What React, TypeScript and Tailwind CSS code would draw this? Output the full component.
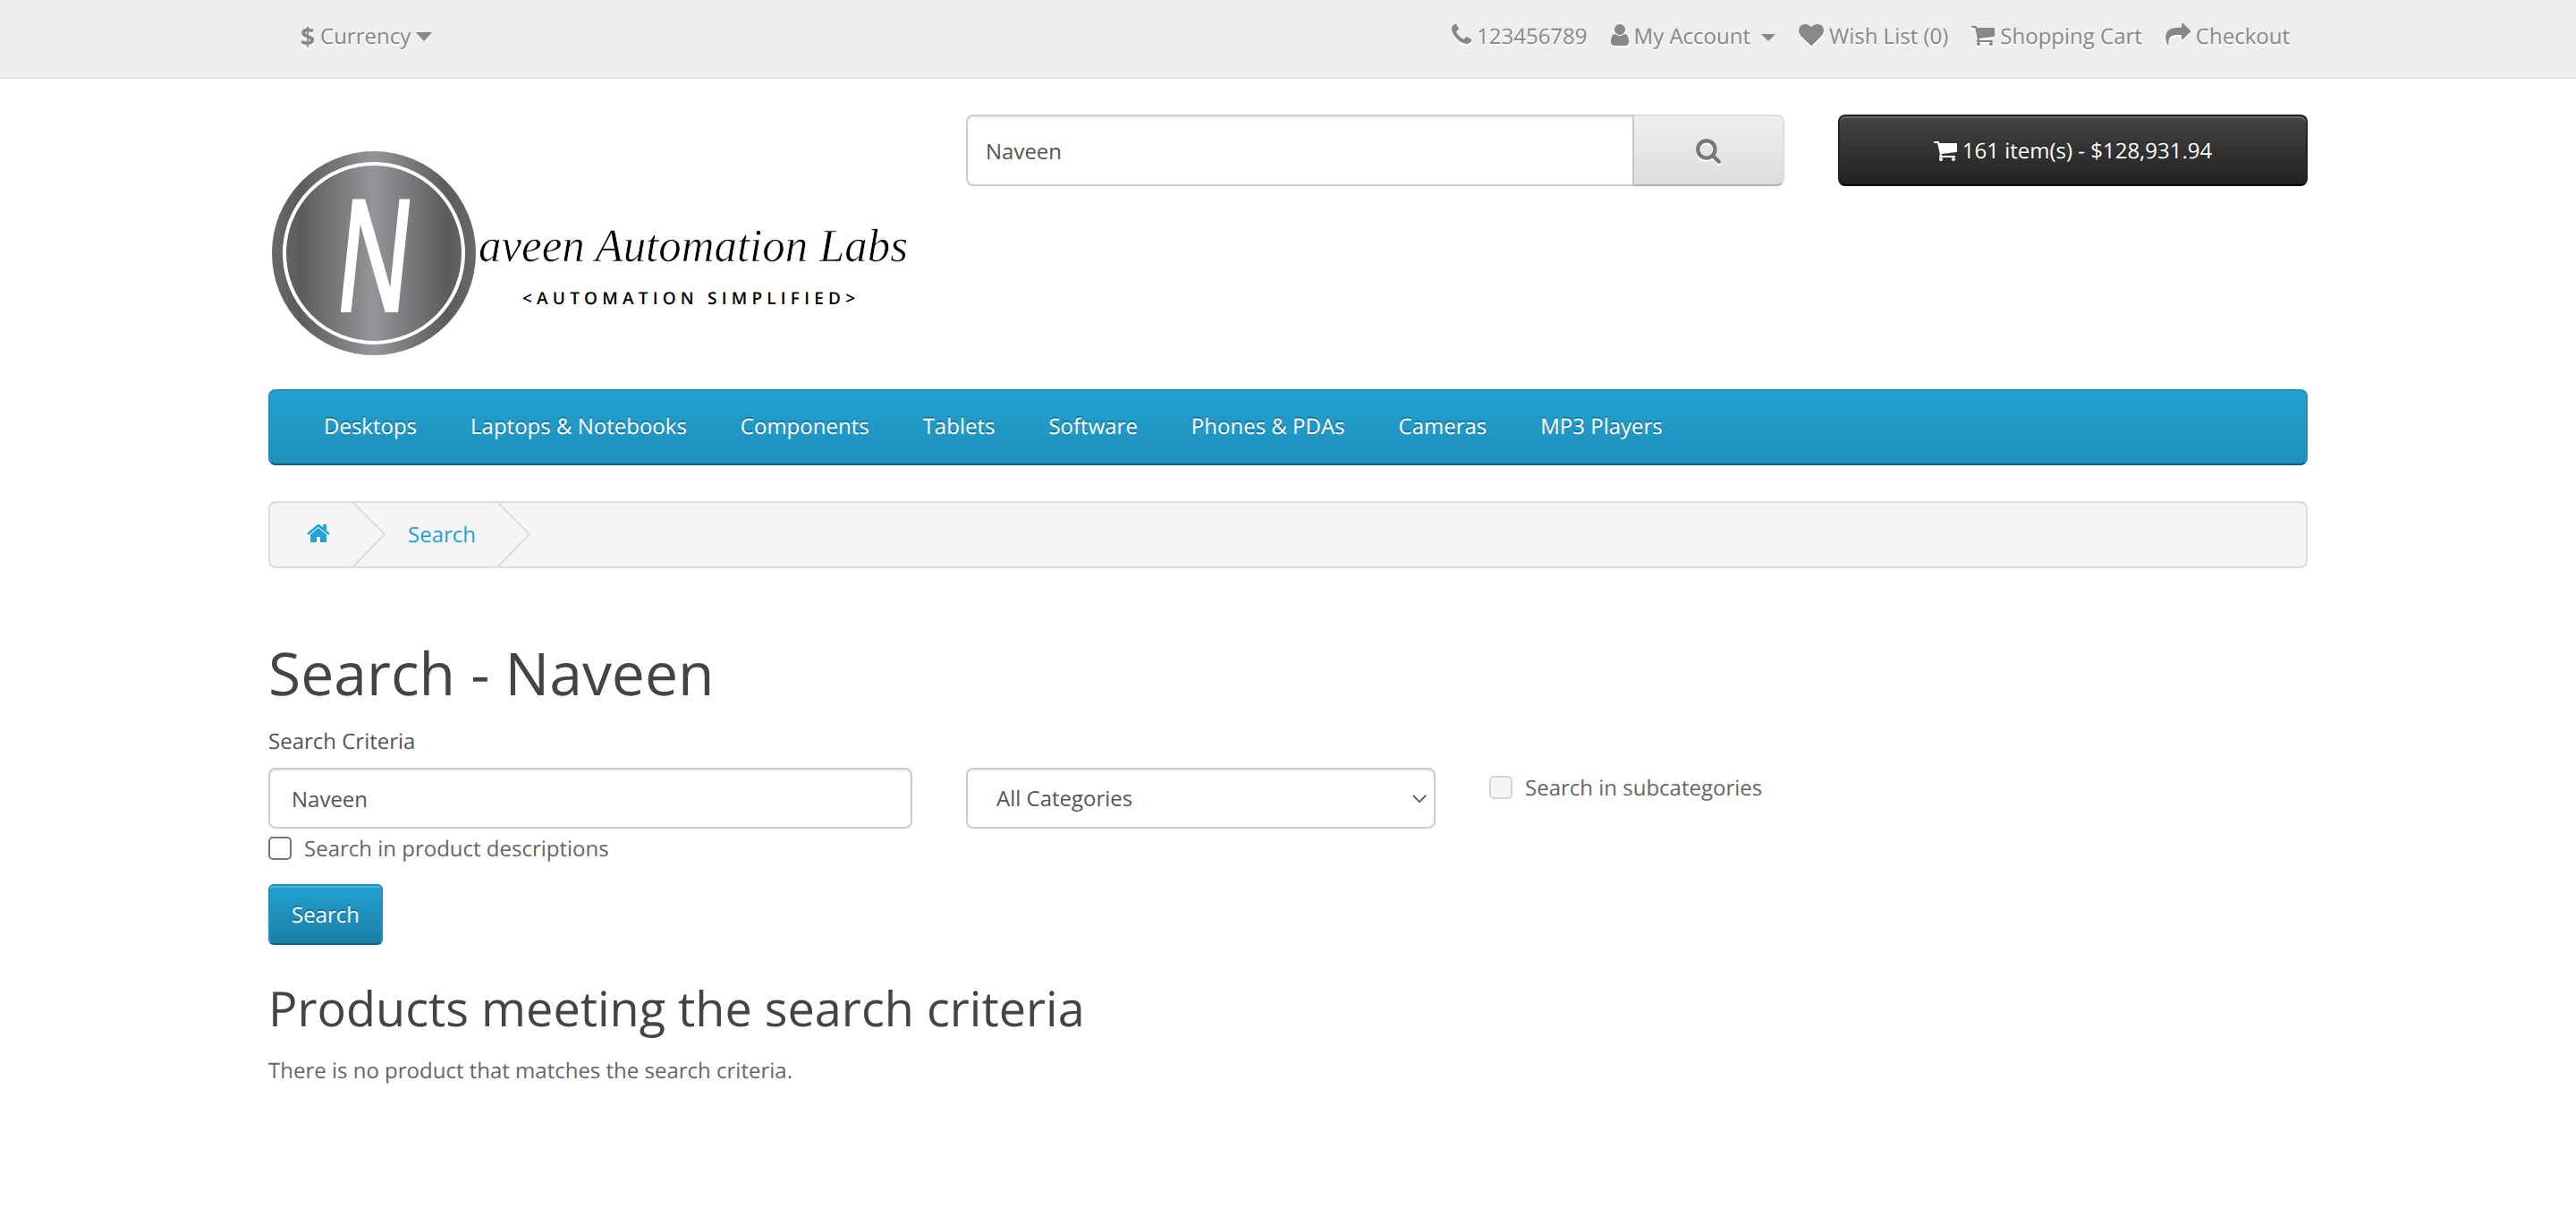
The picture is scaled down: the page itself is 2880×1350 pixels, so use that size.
const P = {
  phone: "M1600 1240q0 27-10 70.5t-21 68.5q-21 50-122 106-94 51-186 51-27 0-53-3.5t-57.5-12.5-47-14.5-55.5-20.5-49-18q-98-35-175-83-127-79-264-216t-216-264q-48-77-83-175-3-9-18-49t-20.5-55.5-14.5-47-12.5-57.5-3.5-53q0-92 51-186 56-101 106-122 25-11 68.5-21t70.5-10q14 0 21 3 18 6 53 76 11 19 30 54t35 63.5 31 53.5q3 4 17.5 25t21.5 35.5 7 28.5q0 20-28.5 50t-62 55-62 53-28.5 46q0 9 5 22.5t8.5 20.5 14 24 11.5 19q76 137 174 235t235 174q2 1 19 11.5t24 14 20.5 8.5 22.5 5q18 0 46-28.5t53-62 55-62 50-28.5q14 0 28.5 7t35.5 21.5 25 17.5q25 15 53.5 31t63.5 35 54 30q70 35 76 53 3 7 3 21z",
  user: "M1536 1399q0 109-62.5 187t-150.5 78h-854q-88 0-150.5-78t-62.5-187q0-85 8.5-160.5t31.5-152 58.5-131 94-89 134.5-34.5q131 128 313 128t313-128q76 0 134.5 34.5t94 89 58.5 131 31.5 152 8.5 160.5zm-256-887q0 159-112.5 271.5t-271.5 112.5-271.5-112.5-112.5-271.5 112.5-271.5 271.5-112.5 271.5 112.5 112.5 271.5z",
  heart: "M896 1664q-26 0-44-18l-624-602q-10-8-27.5-26t-55.5-65.5-68-97.5-53.5-121-23.5-138q0-220 127-344t351-124q62 0 126.5 21.5t120 58 95.5 68.5 76 68q36-36 76-68t95.5-68.5 120-58 126.5-21.5q224 0 351 124t127 344q0 221-229 450l-623 600q-18 18-44 18z",
  cart: "M704 1536q0 52-38 90t-90 38-90-38-38-90 38-90 90-38 90 38 38 90zm896 0q0 52-38 90t-90 38-90-38-38-90 38-90 90-38 90 38 38 90zm128-1088v512q0 24-16.5 42.5t-40.5 21.5l-1044 122q13 60 13 70 0 16-24 64h920q26 0 45 19t19 45-19 45-45 19h-1024q-26 0-45-19t-19-45q0-11 8-31.5t16-36 21.5-40 15.5-29.5l-177-823h-204q-26 0-45-19t-19-45 19-45 45-19h256q16 0 28.5 6.5t19.5 15.5 13 24.5 8 26 5.5 29.5 4.5 26h1201q26 0 45 19t19 45z",
  share: "M1792 640q0 26-19 45l-512 512q-19 19-45 19t-45-19-19-45v-256h-224q-98 0-175.5 6t-154 21.5-133 42.5-105.5 69.5-79.5 103-48 142-18 186.5q0 45 4 102 0 5 2 20t2 23q0 13-7.5 21.5t-20.5 8.5q-14 0-24-15-6-8-11-19t-11.5-26-9.5-22q-127-285-127-451 0-199 53-333 162-403 875-403h224v-256q0-26 19-45t45-19 45 19l512 512q19 19 19 45z",
  home: "M1472 992v480q0 26-19 45t-45 19h-384v-384h-256v384h-384q-26 0-45-19t-19-45v-480q0-1 .5-3t.5-3l575-474 575 474q1 2 1 6zm223-69l-62 74q-8 9-21 11h-3q-13 0-21-7l-692-577-692 577q-12 8-24 7-13-2-21-11l-62-74q-8-10-7-23.5t11-21.5l719-599q32-26 76-26t76 26l244 204v-195q0-14 9-23t23-9h192q14 0 23 9t9 23v408l219 182q10 8 11 21.5t-7 23.5z",
  search: "M1216 832q0-185-131.5-316.5t-316.5-131.5-316.5 131.5-131.5 316.5 131.5 316.5 316.5 131.5 316.5-131.5 131.5-316.5zm512 832q0 52-38 90t-90 38q-54 0-90-38l-343-342q-179 124-399 124-143 0-273.5-55.5t-225-150-150-225-55.5-273.5 55.5-273.5 150-225 225-150 273.5-55.5 273.5 55.5 225 150 150 225 55.5 273.5q0 220-124 399l343 343q37 37 37 90z",
};

function Icon({ d, className }: { d: string; className: string }) {
  return (
    <svg viewBox="0 0 1792 1792" className={className} fill="currentColor" aria-hidden="true">
      <path d={d} />
    </svg>
  );
}

function TopLink({ icon, box, label, caret }: { icon: string; box: string; label: string; caret?: boolean }) {
  return (
    <span className="flex items-center [text-shadow:0_2px_0_#fff]">
      <span className={`${box} h-[28px] mr-[6px] -mt-[4px] flex justify-center`}>
        <Icon d={icon} className="w-[28px] h-[28px] shrink-0 drop-shadow-[0_2px_0_#fff]" />
      </span>
      <span>{label}</span>
      {caret && <span className="ml-[12px] mt-[2px] w-0 h-0 border-x-[8px] border-x-transparent border-t-[8px] border-t-[#888]" />}
    </span>
  );
}

function Logo() {
  return (
    <svg viewBox="0 0 720 287" className="w-[720px] h-[287px] block" aria-label="Naveen Automation Labs">
      <defs>
        <linearGradient id="metal" x1="0" x2="1" y1="0" y2="0">
          <stop offset="0" stopColor="#696969" />
          <stop offset="0.14" stopColor="#5c5c5c" />
          <stop offset="0.5" stopColor="#94959a" />
          <stop offset="0.86" stopColor="#5c5c5c" />
          <stop offset="1" stopColor="#696969" />
        </linearGradient>
      </defs>
      <circle cx="118" cy="155" r="114" fill="url(#metal)" />
      <circle cx="118" cy="155" r="100" fill="none" stroke="#fff" strokeWidth="4" />
      <text textAnchor="middle" fill="#fff" stroke="#fff" strokeWidth="4" fontFamily="'Liberation Sans', sans-serif" fontWeight="400" fontSize="178" transform="translate(113 219) skewX(-6) scale(0.62 1)">N</text>
      <text fill="#000" stroke="#fff" strokeWidth="0.45" fontFamily="'Liberation Serif', serif" fontStyle="italic" fontSize="36" textLength="480" lengthAdjust="spacingAndGlyphs" transform="translate(235 164) scale(1 1.45)">aveen Automation Labs</text>
      <text x="284" y="212" fill="#000" fontFamily="'Open Sans', sans-serif" fontWeight="600" fontSize="19" textLength="372" lengthAdjust="spacing">&lt;AUTOMATION SIMPLIFIED&gt;</text>
    </svg>
  );
}

const nav = ["Desktops", "Laptops & Notebooks", "Components", "Tablets", "Software", "Phones & PDAs", "Cameras", "MP3 Players"];

export default function App() {
  return (
    <div className="min-h-[1350px] bg-white text-[24px] leading-[40px] text-[#666] font-['Open_Sans',sans-serif] [text-rendering:geometricPrecision]">
      <div className="h-[88px] bg-[#eeeeee] border-b-2 border-[#e2e2e2] text-[#888]">
        <div className="w-[2280px] mx-auto h-[80px] pt-[2px] flex items-center justify-between pl-[36px] pr-[20px]">
          <span className="flex items-center [text-shadow:0_2px_0_#fff]">
            <span className="font-bold text-[#888] text-[28px] mr-[6px]">$</span>
            <span>Currency</span>
            <span className="ml-[6px] w-0 h-0 border-x-[9px] border-x-transparent border-t-[10px] border-t-[#888]" />
          </span>
          <div className="flex items-center gap-[26px]">
            <TopLink icon={P.phone} box="w-[22px]" label="123456789" />
            <TopLink icon={P.user} box="w-[20px]" label="My Account" caret />
            <TopLink icon={P.heart} box="w-[28px]" label="Wish List (0)" />
            <TopLink icon={P.cart} box="w-[26px]" label="Shopping Cart" />
            <TopLink icon={P.share} box="w-[28px]" label="Checkout" />
          </div>
        </div>
      </div>

      <div className="w-[2280px] mx-auto">
        <header className="flex pt-[40px] gap-[60px] h-[347px]">
          <div className="w-[720px]"><Logo /></div>
          <div className="w-[915px] h-[80px] flex">
            <input readOnly value="Naveen" className="flex-1 min-w-0 h-[80px] px-[20px] text-[24px] text-[#555] bg-white border-2 border-[#ccc] rounded-l-[8px] shadow-[inset_0_2px_2px_rgba(0,0,0,0.075)] outline-none" />
            <div className="w-[168px] h-[80px] flex items-center justify-center text-[#777] bg-linear-to-b from-[#eeeeee] to-[#dddddd] border-2 border-l-0 border-[#ddd] border-b-[#b3b3b3] rounded-r-[8px] shadow-[inset_0_2px_0_rgba(255,255,255,0.2),0_2px_4px_rgba(0,0,0,0.05)]">
              <Icon d={P.search} className="w-[30px] h-[30px] drop-shadow-[0_2px_0_#fff]" />
            </div>
          </div>
          <div className="w-[525px] h-[80px] pt-[1px] flex items-center justify-center text-white bg-linear-to-b from-[#444444] to-[#222222] border-2 border-[#222] border-b-black rounded-[8px] shadow-[inset_0_2px_0_rgba(255,255,255,0.2)] [text-shadow:0_-2px_0_rgba(0,0,0,0.25)]">
            <span className="w-[26px] h-[28px] mr-[6px] -mt-[2px] flex justify-center">
              <Icon d={P.cart} className="w-[28px] h-[28px] shrink-0" />
            </span>
            <span>161 item(s) - $128,931.94</span>
          </div>
        </header>

        <nav className="h-[85px] flex items-center gap-[60px] pl-[60px] pb-[1px] text-white rounded-[8px] bg-linear-to-b from-[#23a1d1] to-[#1f90bb] border-2 border-[#1f90bb] border-b-[#145e7a] [text-shadow:0_-2px_0_rgba(0,0,0,0.25)]">
          {nav.map((n) => <span key={n}>{n}</span>)}
        </nav>

        <div className="relative mt-[40px] h-[75px] flex items-center bg-[#f5f5f5] border-2 border-[#ddd] rounded-[8px] text-[#23a1d1]">
          <Icon d={P.home} className="ml-[40px] w-[28px] h-[28px] -mt-[4px]" />
          <span className="ml-[86px]">Search</span>
          <svg viewBox="0 0 72 75" className="absolute left-[90px] top-[-2px] w-[72px] h-[75px]" fill="none" stroke="#ddd" strokeWidth="2" aria-hidden="true">
            <path d="M2 1 L38 37 L2 74" />
          </svg>
          <svg viewBox="0 0 72 75" className="absolute left-[252px] top-[-2px] w-[72px] h-[75px]" fill="none" stroke="#ddd" strokeWidth="2" aria-hidden="true">
            <path d="M2 1 L38 37 L2 74" />
          </svg>
        </div>

        <h1 className="mt-[81px] text-[66px] leading-[72px] text-[#444] font-normal">Search - Naveen</h1>
        <div className="mt-[21px] h-[39px] text-[#555]">Search Criteria</div>
        <div className="mt-[10px] flex gap-[60px]">
          <div className="w-[720px]">
            <input readOnly value="Naveen" className="w-full h-[68px] px-[24px] text-[24px] text-[#555] bg-white border-2 border-[#ccc] rounded-[8px] shadow-[inset_0_2px_2px_rgba(0,0,0,0.075)] outline-none" />
            <label className="mt-[2px] flex items-center h-[40px]">
              <input type="checkbox" readOnly className="w-[26px] h-[26px] appearance-none border-2 border-[#767676] rounded-[5px] bg-white" />
              <span className="ml-[14px] translate-y-[1px]">Search in product descriptions</span>
            </label>
          </div>
          <div className="relative w-[525px] h-[68px]">
            <select className="w-full h-[68px] pl-[32px] pr-[40px] appearance-none text-[24px] text-[#555] bg-white border-2 border-[#ccc] rounded-[8px] shadow-[inset_0_2px_2px_rgba(0,0,0,0.075)] outline-none">
              <option>All Categories</option>
            </select>
            <svg viewBox="0 0 20 12" className="absolute right-[9px] top-[29px] w-[18px] h-[11px] pointer-events-none" fill="none" stroke="#555" strokeWidth="2" aria-hidden="true">
              <path d="M2 2 L10 10 L18 2" />
            </svg>
          </div>
          <label className="flex items-center h-[44px] text-[#666]">
            <input type="checkbox" disabled className="w-[26px] h-[26px] appearance-none border-2 border-[#d5d5d5] rounded-[5px] bg-[#f5f5f5]" />
            <span className="ml-[14px] translate-y-[1px]">Search in subcategories</span>
          </label>
        </div>
        <div className="mt-[20px] w-[128px] h-[68px] pt-[2px] flex items-center justify-center text-white rounded-[6px] bg-linear-to-b from-[#23a1d1] to-[#1b7fa6] border-2 border-[#1f90bb] border-b-[#145e7a] shadow-[inset_0_2px_0_rgba(255,255,255,0.2),0_2px_4px_rgba(0,0,0,0.05)] [text-shadow:0_-2px_0_rgba(0,0,0,0.25)]">Search</div>
        <h2 className="mt-[40px] text-[54px] leading-[60px] text-[#444] font-normal">Products meeting the search criteria</h2>
        <p className="mt-[21px] text-[#666]">There is no product that matches the search criteria.</p>
      </div>
    </div>
  );
}
